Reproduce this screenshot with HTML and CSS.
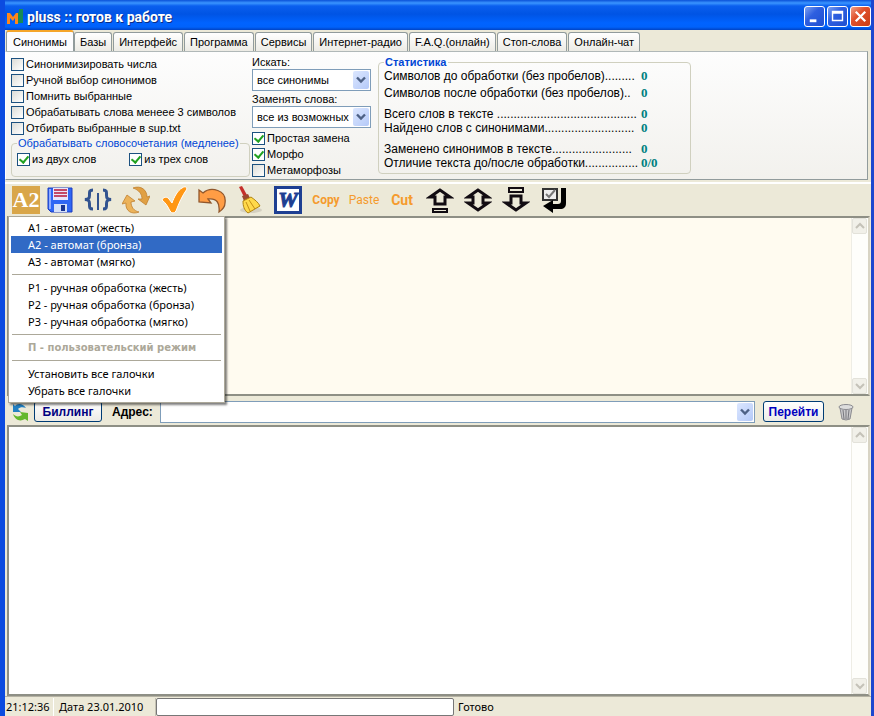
FILE: index.html
```html
<!DOCTYPE html>
<html lang="ru">
<head>
<meta charset="utf-8">
<title>pluss :: готов к работе</title>
<link rel="stylesheet" href="styles.css">
</head>
<body>
<div class="window">
  <header class="titlebar">
    <svg class="logo" viewBox="0 0 16 16" aria-hidden="true"><path d="M10 4l2-1V0h4v14h-5z" fill="#178a57"/><path d="M0 15V4h3l3 4 3-4h2v11H8V9l-2 3-3-3v6z" fill="#ff861c"/></svg>
    <h1>pluss :: готов к работе</h1>
    <div class="winbtns">
      <button class="winbtn" aria-label="Свернуть"><svg viewBox="0 0 20 20"><path d="M5 13h7v3H5z" fill="#fff"/></svg></button>
      <button class="winbtn" aria-label="Развернуть"><svg viewBox="0 0 20 20"><path d="M4 4h12v11H4zM5.500 7v6.500h9V7z" fill="#fff" fill-rule="evenodd"/></svg></button>
      <button class="winbtn close" aria-label="Закрыть"><svg viewBox="0 0 20 20"><path d="M5 5l10 10M15 5L5 15" stroke="#fff" stroke-width="2.400"/></svg></button>
    </div>
  </header>

  <nav class="tabs">
    <button class="tab active">Синонимы</button>
    <button class="tab">Базы</button>
    <button class="tab">Интерфейс</button>
    <button class="tab">Программа</button>
    <button class="tab">Сервисы</button>
    <button class="tab">Интернет-радио</button>
    <button class="tab">F.A.Q.(онлайн)</button>
    <button class="tab">Стоп-слова</button>
    <button class="tab">Онлайн-чат</button>
  </nav>

  <section class="options">
    <div class="col-checks">
      <label class="check"><input type="checkbox">Синонимизировать числа</label>
      <label class="check"><input type="checkbox">Ручной выбор синонимов</label>
      <label class="check"><input type="checkbox">Помнить выбранные</label>
      <label class="check"><input type="checkbox">Обрабатывать слова менеее 3 символов</label>
      <label class="check"><input type="checkbox">Отбирать выбранные в sup.txt</label>
      <fieldset class="phrases">
        <legend>Обрабатывать словосочетания (медленее)</legend>
        <label class="check"><input type="checkbox" checked>из двух слов</label>
        <label class="check"><input type="checkbox" checked>из трех слов</label>
      </fieldset>
    </div>
    <div class="col-search">
      <label class="caption" for="find">Искать:</label>
      <div class="combo">
        <select id="find"><option>все синонимы</option></select>
        <span class="arrow"><svg viewBox="0 0 10 8"><path d="M1 1.500l4 4 4-4" fill="none" stroke="#4d6185" stroke-width="2.400"/></svg></span>
      </div>
      <label class="caption" for="swap">Заменять слова:</label>
      <div class="combo">
        <select id="swap"><option>все из возможных</option></select>
        <span class="arrow"><svg viewBox="0 0 10 8"><path d="M1 1.500l4 4 4-4" fill="none" stroke="#4d6185" stroke-width="2.400"/></svg></span>
      </div>
      <div class="modes">
        <label class="check"><input type="checkbox" checked>Простая замена</label>
        <label class="check"><input type="checkbox" checked>Морфо</label>
        <label class="check"><input type="checkbox">Метаморфозы</label>
      </div>
    </div>
    <fieldset class="stats">
      <legend>Статистика</legend>
      <dl>
        <div><dt>Символов до обработки (без пробелов).........</dt><dd>0</dd></div>
        <div class="near"><dt>Символов после обработки (без пробелов)..</dt><dd>0</dd></div>
        <div class="group"><dt>Всего слов в тексте ..........................................</dt><dd>0</dd></div>
        <div><dt>Найдено слов с синонимами...........................</dt><dd>0</dd></div>
        <div class="group"><dt>Заменено синонимов в тексте........................</dt><dd>0</dd></div>
        <div><dt>Отличие текста до/после обработки................</dt><dd>0/0</dd></div>
      </dl>
    </fieldset>
  </section>

  <div class="toolbar">
    <button aria-label="Режим A2" class="mode"><span class="a2">A2</span></button>
    <button aria-label="Сохранить"><svg viewBox="0 0 28 28"><path d="M2 2h24v24H5l-3-3z" fill="#2f66f4" stroke="#1c3cc0"/><path d="M7 2h15v12H7z" fill="#e8e6fb"/><path d="M8 4h13M8 7h13M8 10h13" stroke="#b81738" stroke-width="1.500"/><path d="M8 18h13v8H8z" fill="#d5e0f8"/><path d="M15 19h4v6h-4z" fill="#193493"/><path d="M4 3v20" stroke="#8eabff" stroke-width="2"/></svg></button>
    <button aria-label="Скобки"><svg viewBox="0 0 28 28" fill="none" stroke="#32538f" stroke-width="3"><path d="M9 4C5 4 5.500 6 5.500 9S5 13 1 13.500C5 14 5.500 15 5.500 18S5 23 9 23M19 4c4 0 3.500 2 3.500 5s.5 4 4.500 4.500C23 14 22.500 15 22.500 18s.5 5-3.500 5"/><path d="M14 7v17" stroke-width="2"/></svg></button>
    <button aria-label="Обновить"><svg viewBox="0 0 28 28" stroke="#c08030" stroke-width=".8"><path d="M11 2c8-3 14 2 14 9l3-1-4 9-8-6h4c0-5-3-9-9-11z" fill="#e0a044"/><path d="M17 26C10 29 3 25 4 17l-4 1 5-9 8 6-4 1c0 5 3 9 8 10z" fill="#ecb35a"/></svg></button>
    <button aria-label="Обработать"><svg viewBox="0 0 28 28"><path d="M2 14c1-3 5-4 7-1l3 4C14 11 18 4 22 2q4-3 5 1C22 10 19 17 16 25q-3 4-6 0C8 21 6 17 2 14z" fill="#ff9714" stroke="#fff"/></svg></button>
    <button aria-label="Отменить"><svg viewBox="0 0 28 28"><path d="M1 4l4 3C13 0 29 4 27 17c0 4-3 7-6 9 1-9-2-14-11-13l3 4L1 16z" fill="#ff9d45" stroke="#91572c" stroke-width="1.300"/></svg></button>
    <button aria-label="Очистить"><svg viewBox="0 0 28 28"><ellipse cx="15" cy="24" rx="11" ry="3" fill="#d4d0c1"/><path d="M3 1l3-1 5 9-3 2z" fill="#c52f2b"/><path d="M6 10l6-2 2 4-6 3z" fill="#9c4930"/><path d="M7 15l8-4c4 3 7 5 9 9l-12 7C8 24 7 20 7 15z" fill="#ffd94a" stroke="#b08411"/><path d="M10 16l4 9M13 14l6 9" stroke="#c58d14"/></svg></button>
    <button aria-label="Word"><span class="word">W</span></button>
    <button class="edit copy">Copy</button>
    <button class="edit paste">Paste</button>
    <button class="edit cut">Cut</button>
    <button aria-label="Вверх"><svg viewBox="0 0 28 28" fill="#ece9d8" stroke="#120c12" stroke-width="3"><path d="M14 4L4 11h5v7h10v-7h5z"/><path d="M7 23h14v3H7z" stroke-width="2"/></svg></button>
    <button aria-label="По центру"><svg viewBox="0 0 28 28" fill="#ece9d8" stroke="#120c12" stroke-width="3"><path d="M14 4L4 11h5v6H4l10 7 10-7h-5v-6h5z"/></svg></button>
    <button aria-label="Вниз"><svg viewBox="0 0 28 28" fill="#ece9d8" stroke="#120c12" stroke-width="3"><path d="M14 24L4 17h5v-7h10v7h5z"/><path d="M7 2h14v4H7z" stroke-width="2"/></svg></button>
    <button aria-label="Применить"><svg viewBox="0 0 28 28"><path d="M3 3h14v11H3z" fill="#eee" stroke="#333" stroke-width="2"/><path d="M6 8l3 3 6-7" fill="none" stroke="#777" stroke-width="2"/><path d="M21 2h5v15c0 4-2 6-6 6h-7v4L3 20l10-6v4h5q3 0 3-3z" fill="#000"/></svg></button>
    <div class="menu" role="menu">
      <button role="menuitem">A1 - автомат (жесть)</button>
      <button role="menuitem" class="selected">A2 - автомат (бронза)</button>
      <button role="menuitem">A3 - автомат (мягко)</button>
      <hr>
      <button role="menuitem">P1 - ручная обработка (жесть)</button>
      <button role="menuitem">P2 - ручная обработка (бронза)</button>
      <button role="menuitem">P3 - ручная обработка (мягко)</button>
      <hr>
      <button role="menuitem" disabled>П - пользовательский режим</button>
      <hr>
      <button role="menuitem">Установить все галочки</button>
      <button role="menuitem">Убрать все галочки</button>
    </div>
  </div>

  <main class="pane editor">
    <textarea aria-label="Текст"></textarea>
    <div class="scroll">
      <button aria-label="Прокрутить вверх"><svg viewBox="0 0 10 8"><path d="M1 6l4-4 4 4" fill="none" stroke="#c4c2b8" stroke-width="2"/></svg></button>
      <button aria-label="Прокрутить вниз"><svg viewBox="0 0 10 8"><path d="M1 2l4 4 4-4" fill="none" stroke="#c4c2b8" stroke-width="2"/></svg></button>
    </div>
  </main>

  <form class="address">
    <svg class="sync" viewBox="0 0 18 18" aria-hidden="true"><path d="M15 5C12 0 6 0 4 3L2 1v8h8L7 6c2-2 5-2 8-1z" fill="#2381c4"/><path d="M2 11c3 3 6 3 9 1L9 9l8 1v8l-3-2C9 19 4 17 2 11z" fill="#63b82e"/></svg>
    <button type="button" class="xpbtn">Биллинг</button>
    <label for="url">Адрес:</label>
    <div class="combo url">
      <input id="url" type="text">
      <span class="arrow"><svg viewBox="0 0 10 8"><path d="M1 1.500l4 4 4-4" fill="none" stroke="#4d6185" stroke-width="2.400"/></svg></span>
    </div>
    <button type="button" class="xpbtn go">Перейти</button>
    <button type="button" class="trash" aria-label="Очистить адрес"><svg viewBox="0 0 16 18"><path d="M2 5h12l-2 11q-4 2-8 0z" fill="#c9c9cb" stroke="#8b8b90"/><path d="M5 7l1 9M8 7v9M11 7l-1 9" stroke="#77777d"/><ellipse cx="8" cy="4" rx="7" ry="2.500" fill="#ddd" stroke="#8b8b90"/></svg></button>
  </form>

  <section class="pane browser" aria-label="Браузер">
    <div class="page"></div>
    <div class="scroll">
      <button aria-label="Прокрутить вверх"><svg viewBox="0 0 10 8"><path d="M1 6l4-4 4 4" fill="none" stroke="#c4c2b8" stroke-width="2"/></svg></button>
      <button aria-label="Прокрутить вниз"><svg viewBox="0 0 10 8"><path d="M1 2l4 4 4-4" fill="none" stroke="#c4c2b8" stroke-width="2"/></svg></button>
    </div>
  </section>

  <footer class="status">
    <span class="time">21:12:36</span>
    <span class="date">Дата 23.01.2010</span>
    <input type="text" aria-label="Ход обработки" readonly>
    <span class="ready">Готово</span>
  </footer>
</div>
</body>
</html>
```

FILE: styles.css
```css
* { box-sizing: border-box; }
body {
  margin: 0;
  font: 12px/16px "Liberation Sans", Arial, sans-serif;
  color: #000;
}
button, input, select, textarea { font: inherit; color: inherit; margin: 0; border-radius: 0; }
button { padding: 0; border: 0; background: none; }
svg { display: block; }

.window {
  display: flex;
  flex-direction: column;
  height: 100vh;
  min-height: 560px;
  overflow: hidden;
  background: #ece9d8;
  border-left: 5px solid #0c4be0;
  border-right: 3px solid #1c47cf;
}

/* Title bar */
.titlebar {
  display: flex;
  align-items: center;
  flex: none;
  height: 30px;
  margin: 0 -3px 0 -5px;
  padding: 3px 3px 0 7px;
  background: linear-gradient(#0a51d8 0, #3a95ff 3px, #0a5fee 6px, #0054e4 14px, #0063ff 23px, #0062fb 27px, #0043c4 30px);
}
.logo { width: 16px; height: 16px; margin-right: 4px; }
.titlebar h1 {
  flex: 1;
  margin: 0;
  font: bold 14px/18px Roboto, "Noto Sans", sans-serif;
  color: #fff;
  text-shadow: 1px 1px #0a2d86;
}
.winbtns { display: flex; gap: 2px; }
.winbtn {
  width: 21px;
  height: 21px;
  border: 1px solid #fff;
  border-radius: 3px;
  background: linear-gradient(135deg, #7ea2f0, #2e5fe0 40%, #1f4fd0);
}
.winbtn.close { background: linear-gradient(135deg, #f0a088, #e0512c 40%, #c93c14); }

/* Tabs */
.tabs {
  display: flex;
  align-items: flex-end;
  flex: none;
  height: 21px;
  gap: 1px;
  padding-left: 1px;
}
.tab {
  height: 19px;
  padding: 0 5px;
  line-height: 18px;
  font-size: 11px;
  white-space: nowrap;
  border: 1px solid #919b9c;
  border-bottom: 0;
  border-radius: 3px 3px 0 0;
  background: linear-gradient(#fff, #ecebe5);
}
.tab.active {
  height: 21px;
  margin-right: -1px;
  padding: 0 6px;
  border-top: 2px solid #f5a52a;
  line-height: 16px;
  background: #fcfcfe;
}

/* Options */
.options {
  display: flex;
  align-items: flex-start;
  flex: none;
  height: 129px;
  margin-right: 3px;
  padding: 4px 5px 0;
  border: 1px solid #919b9c;
  border-left-color: #fff;
  border-top-color: #b0b8b8;
  background: linear-gradient(#fdfdfd, #f2f1ed);
}
.col-checks, .col-search { font-size: 11px; }
.check { display: flex; align-items: center; gap: 2px; height: 16px; white-space: nowrap; }
.check input {
  appearance: none;
  flex: none;
  width: 13px;
  height: 13px;
  border: 1px solid #1c5180;
  background: linear-gradient(135deg, #dcdcd7, #fff);
}
.check input:checked {
  background: #fff;
}
.check input:checked::before {
  content: "";
  display: block;
  width: 4px;
  height: 7px;
  margin: 0 0 0 3px;
  border: solid #21a121;
  border-width: 0 2px 2px 0;
  transform: rotate(40deg);
}
.col-checks { width: 241px; }
.phrases {
  display: flex;
  gap: 33px;
  height: 41px;
  min-width: 0;
  margin: 0 2px 0 0;
  padding: 0 0 0 5px;
  border: 1px solid #d0d0bf;
  border-radius: 4px;
}
.phrases legend {
  padding: 0 1px;
  line-height: 14px;
  color: #0046d5;
  white-space: nowrap;
}
.phrases .check { height: 18px; }
.col-search { width: 119px; }
.caption { display: block; height: 13px; line-height: 13px; }
.combo {
  display: flex;
  position: relative;
  height: 22px;
  border: 1px solid #7f9db9;
  background: #fff;
}
.combo select, .combo input {
  appearance: none;
  flex: 1;
  min-width: 0;
  padding: 0 0 0 4px;
  border: 0;
  outline: 0;
  background: #fff;
}
.arrow {
  display: flex;
  align-items: center;
  justify-content: center;
  width: 16px;
  margin: 1px;
  border-radius: 2px;
  background: linear-gradient(135deg, #dce7ff, #b4c9f8);
  pointer-events: none;
}
.arrow svg { width: 10px; height: 8px; }
.col-search .combo + .caption { margin-top: 2px; }
.modes { margin-top: 2px; }
.stats {
  width: 313px;
  height: 118px;
  margin: 0 0 0 7px;
  padding: 0 0 0 5px;
  border: 1px solid #d0d0bf;
  border-radius: 4px;
}
.stats legend { padding: 0 1px; font-size: 11px; line-height: 12px; font-weight: bold; color: #0046d5; }
.stats dl { margin: 1px 0 0; }
.stats dl div { display: flex; height: 14px; line-height: 14px; white-space: nowrap; }
.stats dl .near { margin-top: 3px; }
.stats dl .group { margin-top: 7px; }
.stats dt { width: 257px; overflow: hidden; }
.stats dd { margin: 0; font: bold 13px/14px "Liberation Serif", serif; color: #008080; }

/* Toolbar */
.toolbar {
  display: flex;
  align-items: center;
  flex: none;
  position: relative;
  height: 34px;
  margin-top: 2px;
  padding-left: 6px;
  border-top: 2px solid #fff;
}
.toolbar > button { flex: none; display: flex; align-items: center; justify-content: center; width: 38px; height: 30px; }
.toolbar > .mode { width: 30px; }
.toolbar > button > svg { width: 28px; height: 28px; }
.a2 {
  width: 28px;
  height: 28px;
  background: #d9a649;
  color: #fff;
  font: bold 22px/28px "Liberation Serif", serif;
}
.word {
  width: 28px;
  height: 28px;
  border: 3px solid #1e3f92;
  background: #fff;
  color: #1e3f92;
  font: italic bold 22px/22px "Liberation Serif", serif;
  -webkit-text-stroke: 1px #1e3f92;
}
.toolbar .edit { color: #f59b2d; font-family: Roboto, sans-serif; }
.toolbar .copy { font-weight: bold; }
.toolbar .cut { font-weight: bold; font-size: 14px; }

.menu {
  position: absolute;
  z-index: 2;
  top: 32px;
  left: 3px;
  width: 217px;
  padding: 2px 2px 3px;
  border: 1px solid #aca899;
  background: #fff;
  box-shadow: 2px 2px 2px rgba(0, 0, 0, .5);
}
.menu button {
  display: block;
  width: 100%;
  height: 17px;
  padding: 0 0 0 17px;
  font: 11px/16px "Noto Sans", sans-serif;
  text-align: left;
  white-space: nowrap;
}
.menu .selected { background: #316ac5; color: #fff; }
.menu button:disabled { color: #aca899; font: bold 10px/16px "DejaVu Sans", sans-serif; }
.menu hr { height: 1px; margin: 4px 1px; border: 0; background: #aca899; }

/* Text and browser panes */
.pane {
  display: flex;
  min-height: 0;
  margin: 0 1px 0 2px;
  border: 2px solid #8e8f85;
  border-right-color: #d8d4c4;
}
.editor { flex: 180 1 0; background: #fffbf0; }
.browser { flex: 273 1 0; background: #fff; }
.editor textarea { flex: 1; min-width: 0; resize: none; border: 0; outline: 0; background: #fffbf0; }
.page { flex: 1; }
.scroll {
  display: flex;
  flex-direction: column;
  justify-content: space-between;
  width: 17px;
  border-left: 1px solid #eeede5;
  background: #fefefb;
}
.scroll button {
  display: flex;
  align-items: center;
  justify-content: center;
  width: 15px;
  height: 16px;
  border: 1px solid #e3e2da;
  border-radius: 2px;
  background: #f1f0e9;
}
.scroll svg { width: 10px; height: 8px; }

/* Address bar */
.address {
  display: flex;
  align-items: center;
  flex: none;
  height: 29px;
  margin: 0 2px;
  padding: 2px 2px 0;
}
.sync { width: 18px; height: 18px; margin: 0 5px 0 2px; }
.xpbtn {
  height: 21px;
  width: 68px;
  border: 1px solid #003c74;
  border-radius: 3px;
  background: linear-gradient(#fff, #ecebe6);
  color: #000080;
  font-weight: bold;
}
.address label { margin: 0 7px 0 10px; font-weight: bold; }
.url { flex: 1; }
.go { width: 61px; margin-left: 8px; color: #0000c0; }
.trash { margin: 0 13px 0 14px; }
.trash svg { width: 16px; height: 18px; }

/* Status bar */
.status {
  display: flex;
  align-items: center;
  flex: none;
  height: 20px;
  border-top: 1px solid #b5b2a3;
  font: 11px/18px "Noto Sans", sans-serif;
}
.status span { white-space: nowrap; }
.time { width: 49px; padding-left: 1px; border-right: 1px solid #fff; }
.date { width: 102px; padding-left: 5px; border-right: 1px solid #c5c2b3; }
.status input { width: 298px; height: 18px; border: 1px solid #777; border-radius: 2px; background: #fff; }
.ready { padding-left: 4px; }
```
